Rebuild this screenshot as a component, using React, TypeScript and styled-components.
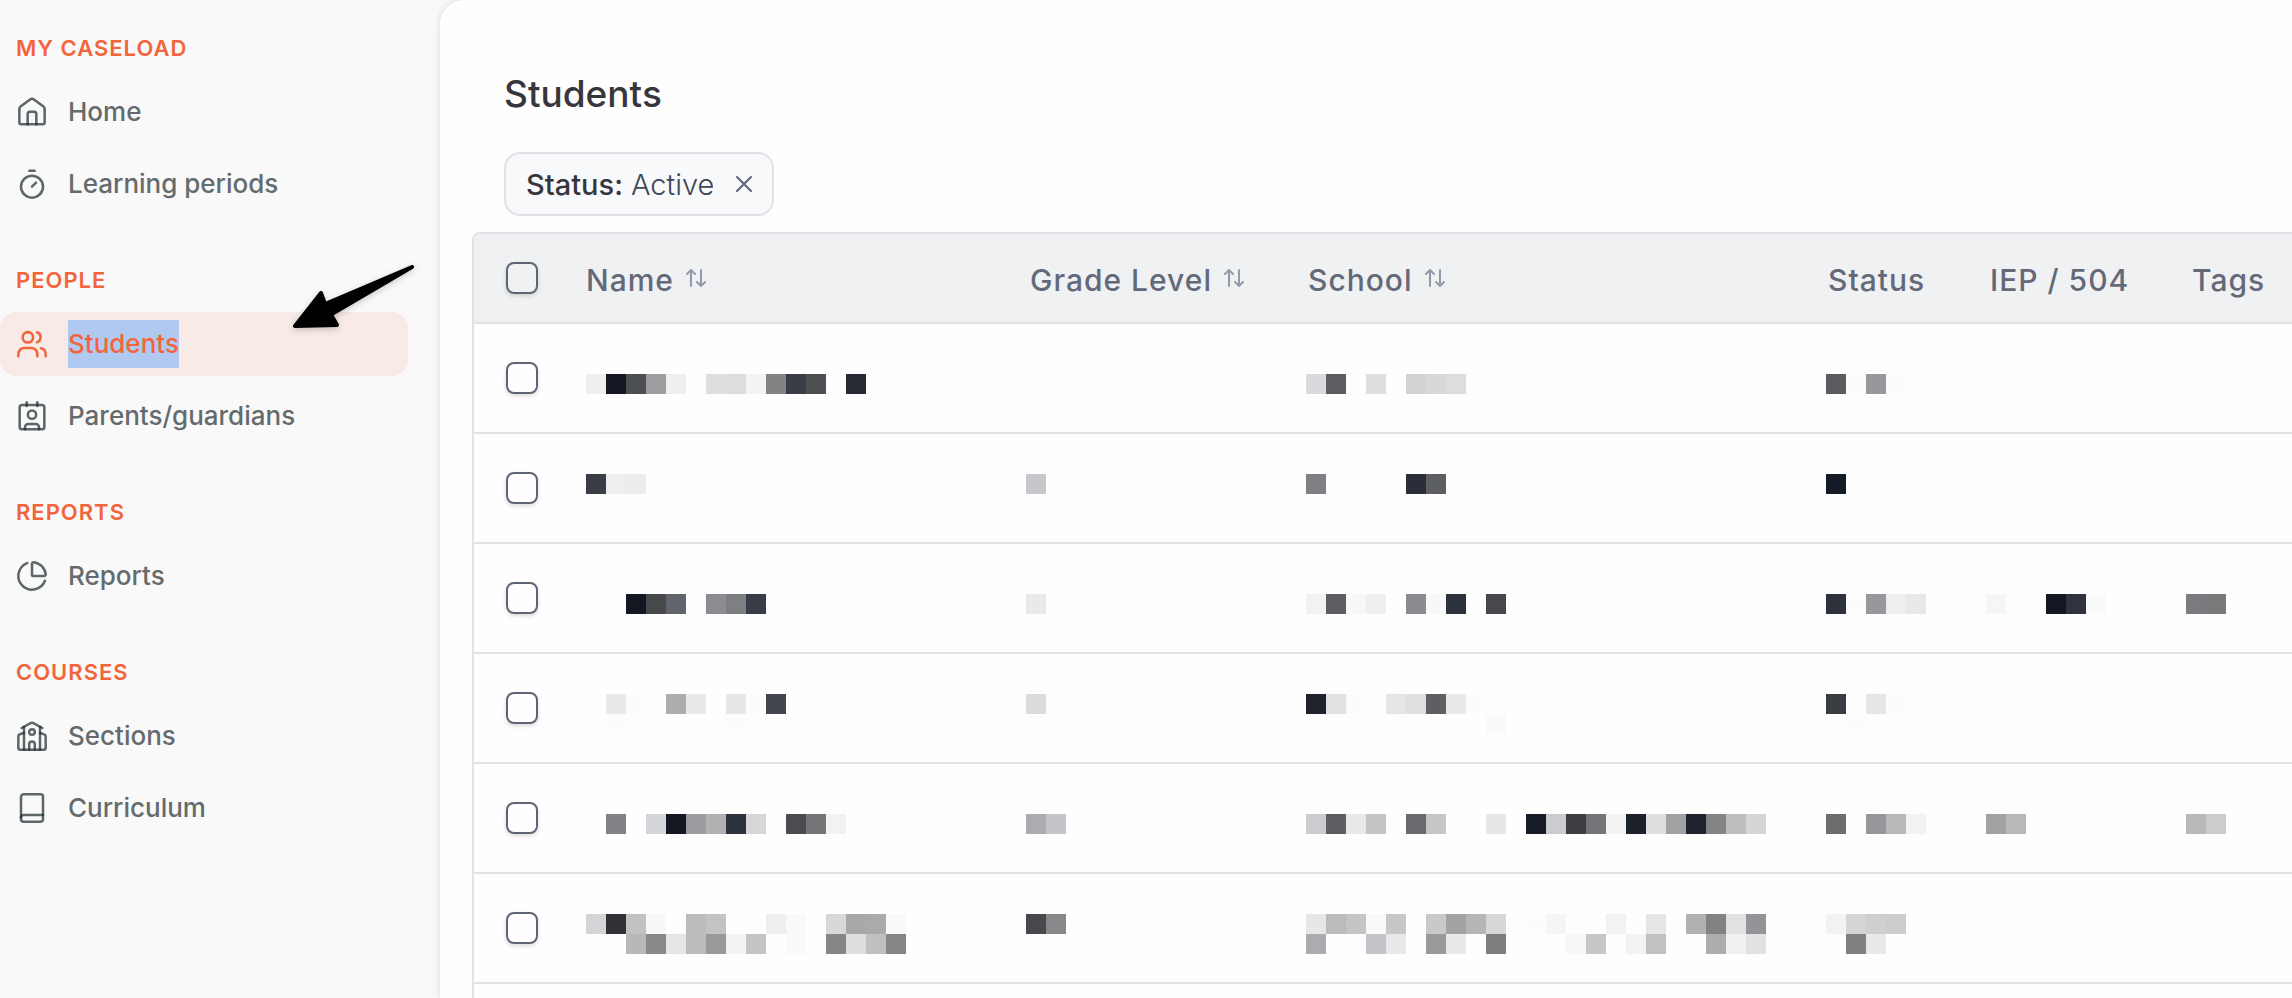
import React, { useState } from "react";
import styled, { createGlobalStyle } from "styled-components";

const colors = {
  accent: "#f2653c",
  accentSoft: "#f8eae6",
  selection: "#b0c9f0",
  navText: "#646b6d",
  navIcon: "rgba(27, 42, 46, 0.7)",
  sidebar: "#f9f9f9",
  surface: "#fefefe",
  line: "#e1e1e7",
  head: "#f0f1f3",
  headText: "#646979",
  box: "#5f6475",
  ink: "#37363c",
};

const GlobalStyle = createGlobalStyle`
  *, *::before, *::after { box-sizing: border-box; }
  body {
    margin: 0;
    background: ${colors.sidebar};
    font-family: Inter, "Liberation Sans", sans-serif;
  }
`;

const Page = styled.div`
  display: flex;
  position: relative;
  min-height: 100vh;
  overflow: hidden;
`;

const Sidebar = styled.nav`
  flex: 0 0 440px;
  display: flex;
  flex-direction: column;
  gap: 48px;
  padding: 32px 32px 32px 0;
`;

const NavSection = styled.section`
  display: flex;
  flex-direction: column;
  gap: 8px;
`;

const NavHeading = styled.h2`
  margin: 0 0 8px;
  padding-left: 16px;
  font-size: 22px;
  line-height: 32px;
  font-weight: 600;
  letter-spacing: 1px;
  text-transform: uppercase;
  color: ${colors.accent};
`;

const NavLink = styled.a<{ $active?: boolean }>`
  display: flex;
  align-items: center;
  gap: 20px;
  height: 64px;
  padding-left: 16px;
  border-radius: 16px;
  font-size: 26px;
  line-height: 48px;
  font-weight: 500;
  text-decoration: none;
  color: ${(p) => (p.$active ? colors.accent : colors.navText)};
  background: ${(p) => (p.$active ? colors.accentSoft : "transparent")};
`;

const NavLabel = styled.span<{ $selected?: boolean }>`
  background: ${(p) => (p.$selected ? colors.selection : "transparent")};
`;

const NavIcon = styled.svg<{ $active?: boolean }>`
  width: 32px;
  height: 32px;
  flex: none;
  fill: none;
  stroke: ${(p) => (p.$active ? colors.accent : colors.navIcon)};
  stroke-width: 1.9;
  stroke-linecap: round;
  stroke-linejoin: round;
`;

const Pointer = styled.svg`
  position: absolute;
  left: 280px;
  top: 256px;
  width: 148px;
  height: 84px;
  pointer-events: none;
  filter: drop-shadow(0 2px 3px rgba(0, 0, 0, 0.2));
`;

const Main = styled.main`
  flex: 1;
  min-width: 0;
  display: flex;
  flex-direction: column;
  padding-left: 32px;
  border-top-left-radius: 24px;
  background: ${colors.surface};
  box-shadow: 0 0 6px rgba(0, 0, 0, 0.14);
`;

const Title = styled.h1`
  margin: 0;
  padding: 70px 32px 34px;
  font-size: 37px;
  line-height: 48px;
  font-weight: 500;
  color: ${colors.ink};
`;

const Filters = styled.div`
  display: flex;
  padding: 0 32px 16px;
`;

const Chip = styled.div`
  display: flex;
  align-items: center;
  height: 64px;
  padding: 2px 16px 0 20px;
  border: 2px solid ${colors.line};
  border-radius: 16px;
  background: #f8f9fb;
  font-size: 29px;
  line-height: 40px;
  font-weight: 300;
  color: #3f4656;
`;

const ChipName = styled.span`
  margin-right: 8px;
  font-weight: 500;
  color: ${colors.ink};
`;

const ChipRemove = styled.button`
  display: flex;
  margin: 0 0 2px 18px;
  padding: 0;
  border: 0;
  background: none;
  color: ${colors.box};
`;

const TableFrame = styled.div`
  flex: 1;
  border: solid ${colors.line};
  border-width: 2px 0 0 2px;
  border-top-left-radius: 8px;
  overflow: hidden;
`;

const Table = styled.table`
  width: 100%;
  table-layout: fixed;
  border-collapse: separate;
  border-spacing: 0;
`;

const Column = styled.col<{ $width?: number }>`
  width: ${(p) => (p.$width ? `${p.$width}px` : "auto")};
`;

const HeadCell = styled.th`
  height: 90px;
  padding: 4px 0 0 24px;
  border-bottom: 2px solid ${colors.line};
  background: ${colors.head};
  text-align: left;
  font-size: 30px;
  line-height: 40px;
  font-weight: 500;
  letter-spacing: 1px;
  white-space: nowrap;
  color: ${colors.headText};
`;

const SortButton = styled.button`
  display: flex;
  align-items: flex-start;
  gap: 12px;
  padding: 0;
  border: 0;
  background: none;
  font: inherit;
  letter-spacing: inherit;
  color: inherit;
`;

const SortIcon = styled.svg`
  width: 20px;
  height: 20px;
  margin-top: 8px;
  fill: none;
  stroke: #9499aa;
  stroke-width: 2;
  stroke-linecap: round;
  stroke-linejoin: round;
`;

const HeadCheckCell = styled(HeadCell)`
  padding: 0 0 0 32px;
`;

const Row = styled.tr`
  --text-top: 50px;
  &:nth-child(even) {
    --text-top: 40px;
  }
`;

const Cell = styled.td<{ $inset: number }>`
  height: 110px;
  padding: var(--text-top) 0 0 ${(p) => p.$inset}px;
  border-bottom: 2px solid ${colors.line};
  vertical-align: top;
`;

const CheckCell = styled.td`
  height: 110px;
  padding: 0 0 0 32px;
  border-bottom: 2px solid ${colors.line};
  vertical-align: middle;
`;

const Checkbox = styled.input`
  display: block;
  appearance: none;
  width: 32px;
  height: 32px;
  margin: 0;
  border: 2px solid ${colors.box};
  border-radius: 8px;
  box-shadow: 0 2px 4px rgba(0, 0, 0, 0.14);
  &:checked {
    background: ${colors.box};
  }
`;

const MosaicSvg = styled.svg`
  display: block;
  shape-rendering: crispEdges;
`;

const TILE = 20;

/* A redacted value: each line lists its tiles as hex colours, "-" for an empty one. */
function Mosaic({ lines }: { lines: string[] }) {
  const grid = lines.map((line) => line.split(" "));
  const width = Math.max(...grid.map((g) => g.length)) * TILE;
  const height = grid.length * TILE;
  return (
    <MosaicSvg width={width} height={height} viewBox={`0 0 ${width} ${height}`} aria-hidden="true">
      {grid.map((tiles, y) =>
        tiles.map((tile, x) =>
          tile === "-" ? null : (
            <rect key={`${x}-${y}`} x={x * TILE} y={y * TILE} width={TILE} height={TILE} fill={`#${tile}`} />
          ),
        ),
      )}
    </MosaicSvg>
  );
}

const icons = {
  home: (
    <>
      <path d="M2.5 9.9c0-.9.4-1.7 1.1-2.2l7-5.1c.8-.6 2-.6 2.8 0l7 5.1c.7.5 1.1 1.3 1.1 2.2v9.85c0 .83-.67 1.5-1.5 1.5H4c-.83 0-1.5-.67-1.5-1.5Z" />
      <path d="M8.75 21.25v-7.7c0-.97.78-1.75 1.75-1.75h3c.97 0 1.75.78 1.75 1.75v7.7" />
    </>
  ),
  stopwatch: (
    <>
      <circle cx="12" cy="14" r="8.25" />
      <path d="M10 2h4" />
      <path d="M12 14l3-3" />
    </>
  ),
  users: (
    <>
      <circle cx="8.9" cy="7" r="3.9" />
      <path d="M15.7 3.2a4 4 0 0 1 0 7.6" />
      <path d="M1.75 21.25V19.5a4.5 4.5 0 0 1 4.5-4.5h5.25a4.5 4.5 0 0 1 4.5 4.5v1.75" />
      <path d="M18.7 15.2a4.5 4.5 0 0 1 3.55 4.4v1.65" />
    </>
  ),
  contact: (
    <>
      <rect x="2.75" y="3.75" width="18.5" height="18.25" rx="1.75" />
      <path d="M8 1.75V4.5" />
      <path d="M16 1.75V4.5" />
      <circle cx="12" cy="11" r="3.1" />
      <path d="M6.75 22V20.5a2.5 2.5 0 0 1 2.5-2.5h5.5a2.5 2.5 0 0 1 2.5 2.5V22" />
    </>
  ),
  pie: (
    <>
      <path d="M8.4 2.3A10.3 10.3 0 1 0 21.7 15.6" />
      <path d="M12 2.9c0-.7.6-1.25 1.3-1.2a10.3 10.3 0 0 1 9 9c.05.7-.5 1.3-1.2 1.3H12.8a.8.8 0 0 1-.8-.8Z" />
    </>
  ),
  school: (
    <>
      <path d="M6 9.75l-3.2 1c-.6.2-1.05.8-1.05 1.45v8.55c0 .83.67 1.5 1.5 1.5h17.5c.83 0 1.5-.67 1.5-1.5V12.2c0-.65-.45-1.25-1.05-1.45l-3.2-1" />
      <path d="M4.25 6l7.1-3.8c.4-.2.9-.2 1.3 0L19.75 6" />
      <path d="M6 5.2v17.05" />
      <path d="M18 5.2v17.05" />
      <circle cx="12" cy="9" r="2.1" />
      <path d="M9.9 22.25v-4a2.1 2.1 0 0 1 4.2 0v4" />
    </>
  ),
  book: (
    <>
      <path d="M3.75 20.25V3.75c0-1.1.9-2 2-2H18.5c.97 0 1.75.78 1.75 1.75v17c0 .97-.78 1.75-1.75 1.75H5.75c-1.1 0-2-.9-2-2Z" />
      <path d="M3.75 19.2c0-1.1.9-2 2-2h14.5" />
    </>
  ),
};

type NavItem = { label: string; icon: keyof typeof icons; active?: boolean };

const navigation: { heading: string; items: NavItem[] }[] = [
  {
    heading: "My caseload",
    items: [
      { label: "Home", icon: "home" },
      { label: "Learning periods", icon: "stopwatch" },
    ],
  },
  {
    heading: "People",
    items: [
      { label: "Students", icon: "users", active: true },
      { label: "Parents/guardians", icon: "contact" },
    ],
  },
  { heading: "Reports", items: [{ label: "Reports", icon: "pie" }] },
  {
    heading: "Courses",
    items: [
      { label: "Sections", icon: "school" },
      { label: "Curriculum", icon: "book" },
    ],
  },
];

/* A column without a width takes whatever room the others leave. */
const columns: { label: string; width?: number; inset: number; sortable?: boolean }[] = [
  { label: "Name", width: 444, inset: 24, sortable: true },
  { label: "Grade Level", width: 278, inset: 20, sortable: true },
  { label: "School", inset: 22, sortable: true },
  { label: "Status", width: 162, inset: 22 },
  { label: "IEP / 504", width: 202, inset: 20 },
  { label: "Tags", width: 124, inset: 18 },
];

const students: (string[] | null)[][] = [
  [
    ["efefef 131722 4e4f53 9c9d9f efefef - dedede dddddd f3f3f3 828385 393d46 4e4f53 - 272a33"],
    null,
    ["dadadc 5d5e62 - dedede - d1d2d4 d8d8d8 dcdddf"],
    ["5b5c60 fcfcfc 97989c fcfcfc"],
    null,
    null,
  ],
  [
    ["3a3d46 eeeeee ededed"],
    ["c6c7cb"],
    ["7f8084 - - - - 2b2e38 5e5f63"],
    ["151a27"],
    null,
    null,
  ],
  [
    ["- - 131722 48494d 61646c - 8b8c90 7e7f83 393d48"],
    ["e9e9e9"],
    ["f2f2f2 5d5e62 f8f8f8 efefef - 8a8b91 f8f8f8 2e323c - 47484c"],
    ["2e323c fcfcfc 97989c eeeeee e8e8e8"],
    ["f6f6f6 - - 131722 30323e f9fbfa"],
    ["7a7b7f 787979"],
  ],
  [
    ["- e8eae9 fcfcfc - acadaf e9e9e9 - e7e7e7 fcfcfc 42454e", "- fcfcfc - - - - - fcfcfc"],
    ["dbdbdb"],
    ["1f222c e2e2e2 fcfcfc - e6e6e6 dfdfe1 5e5f63 e9e9e9 fcfcfc", "- - - - - - - - - fafafa"],
    ["393d41 - e5e7e6 fcfcfc", "- fcfcfc"],
    null,
    null,
  ],
  [
    ["- 828387 - d4d6d9 131722 9b9ca0 b1b1b1 2d313b d7d7d7 - 4b4c50 757678 f2f2f2"],
    ["abacb0 c4c5c9"],
    ["cbcccf 5d5e62 e8e8e8 c4c4c4 - 696a6e c6c6c6 - - e7e7e7 - 171c27 cbccce 3e3f45 747577 f3f3f3 1b202b dedede a0a1a3 1f222c 838486 bdbec0 d5d6d8"],
    ["6c6d6f - 96979b b8b9bb f3f3f3"],
    ["a1a2a4 b8b9bb"],
    ["b8b9bb cccccc"],
  ],
  [
    [
      "d4d5d7 303136 c1c1c1 f8f8f8 - bcbcbc c3c3c3 - - eeeeee f9f9f9 - d8d8d8 a7a8aa a9aaac f9f9f9",
      "- - b7b8ba 88898b e6e6e6 bbbcbe 99999b f3f3f3 c3c4c6 - fafafa - 858688 dedede bfc0c2 858688",
    ],
    ["48494d 87888a"],
    [
      "e7e7e7 bbbbbb c5c5c5 f9f9f9 c6c7c9 - c8c9cb a2a3a5 b4b5b7 d6d7d9 - fcfcfc f5f5f5 - - f2f2f2 - e6e6e6 - b0b1b3 818284 e2e2e2 939498",
      "abacb0 - - c3c4c8 e8e8e8 - 99999b e9e9e9 - 7d7e80 - - - f7f7f7 c6c7c9 - f3f3f3 c1c1c3 - - acadaf f1f1f1 e2e2e2",
    ],
    ["f3f3f3 d5d5d5 cecfd1 cccccc", "- 808183 e8e8e8"],
    null,
    null,
  ],
];

export default function App() {
  const [selected, setSelected] = useState<number[]>([]);
  const [filtered, setFiltered] = useState(true);
  const allSelected = selected.length === students.length;

  const toggle = (i: number) =>
    setSelected((s) => (s.includes(i) ? s.filter((n) => n !== i) : [...s, i]));

  return (
    <>
      <GlobalStyle />
      <Page>
        <Sidebar>
          {navigation.map((section) => (
            <NavSection key={section.heading}>
              <NavHeading>{section.heading}</NavHeading>
              {section.items.map((item) => (
                <NavLink key={item.label} href="#" $active={item.active}>
                  <NavIcon viewBox="0 0 24 24" $active={item.active} aria-hidden="true">
                    {icons[item.icon]}
                  </NavIcon>
                  <NavLabel $selected={item.active}>{item.label}</NavLabel>
                </NavLink>
              ))}
            </NavSection>
          ))}
        </Sidebar>

        <Main>
          <Title>Students</Title>
          <Filters>
            {filtered && (
              <Chip>
                <ChipName>Status:</ChipName>
                <span>Active</span>
                <ChipRemove aria-label="Remove status filter" onClick={() => setFiltered(false)}>
                  <svg width="24" height="24" viewBox="0 0 24 24" fill="none" stroke="currentColor" strokeWidth="2" strokeLinecap="round">
                    <path d="M5 5l14 14M19 5L5 19" />
                  </svg>
                </ChipRemove>
              </Chip>
            )}
          </Filters>

          <TableFrame>
            <Table>
              <colgroup>
                <Column $width={88} />
                {columns.map((c) => (
                  <Column key={c.label} $width={c.width} />
                ))}
              </colgroup>
              <thead>
                <tr>
                  <HeadCheckCell>
                    <Checkbox
                      type="checkbox"
                      aria-label="Select all students"
                      checked={allSelected}
                      onChange={() => setSelected(allSelected ? [] : students.map((_, i) => i))}
                    />
                  </HeadCheckCell>
                  {columns.map((c) => (
                    <HeadCell key={c.label} scope="col">
                      {c.sortable ? (
                        <SortButton>
                          {c.label}
                          <SortIcon viewBox="0 0 20 20" aria-hidden="true">
                            <path d="M5 18V2M1 6l4-4 4 4" />
                            <path d="M15 2v16M11 14l4 4 4-4" />
                          </SortIcon>
                        </SortButton>
                      ) : (
                        c.label
                      )}
                    </HeadCell>
                  ))}
                </tr>
              </thead>
              <tbody>
                {students.map((values, i) => (
                  <Row key={i}>
                    <CheckCell>
                      <Checkbox
                        type="checkbox"
                        aria-label={`Select student ${i + 1}`}
                        checked={selected.includes(i)}
                        onChange={() => toggle(i)}
                      />
                    </CheckCell>
                    {values.map((lines, c) => (
                      <Cell key={c} $inset={columns[c].inset}>
                        {lines && <Mosaic lines={lines} />}
                      </Cell>
                    ))}
                  </Row>
                ))}
              </tbody>
            </Table>
          </TableFrame>
        </Main>

        <Pointer viewBox="280 256 148 84" aria-hidden="true">
          <path
            d="M412 267L325 304 321 293 295 326 337 325 331 314.500 412 267Z"
            stroke="#000"
            strokeWidth="4"
            strokeLinejoin="round"
          />
        </Pointer>
      </Page>
    </>
  );
}
